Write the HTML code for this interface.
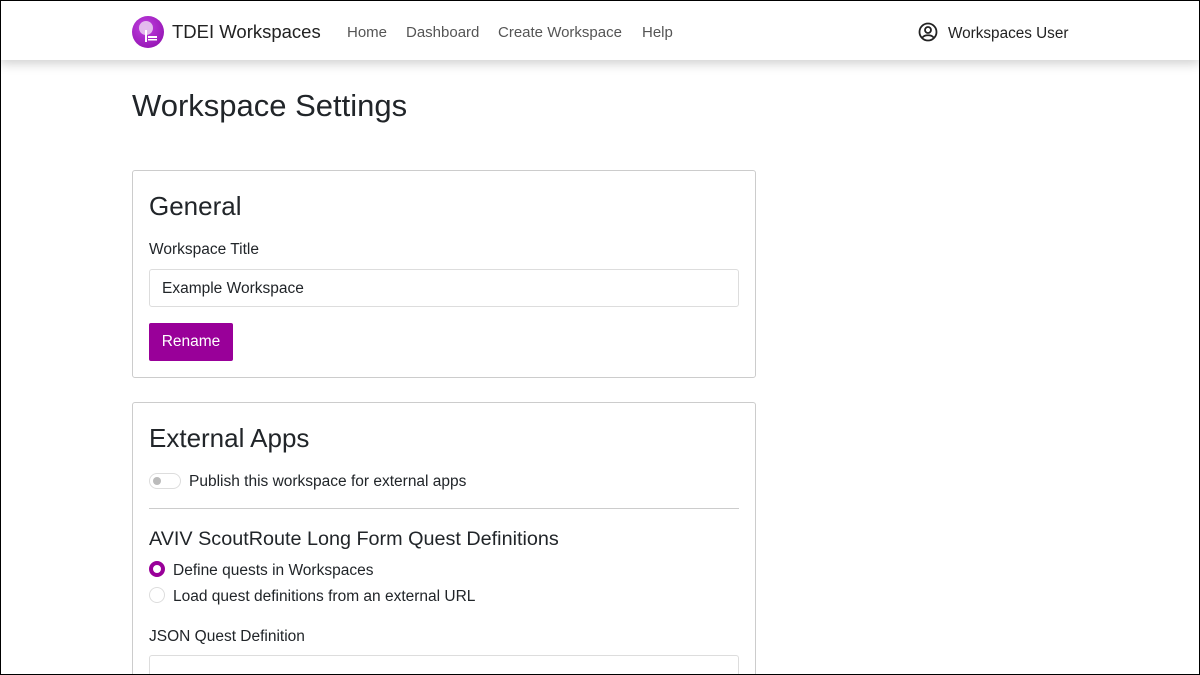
<!DOCTYPE html>
<html><head><meta charset="utf-8"><style>
*{box-sizing:border-box}
html,body{margin:0;width:1200px;height:675px;overflow:hidden;background:#fff;font-family:"Liberation Sans","DejaVu Sans",sans-serif;color:#212529}
#wrap{position:fixed;left:0;top:0;width:1200px;height:675px;overflow:hidden}
.frame{position:absolute;inset:0;border:1px solid #000;pointer-events:none;z-index:10}
nav{position:absolute;left:0;top:0;width:1200px;height:60px;background:#fff;box-shadow:0 4px 10px rgba(0,0,0,.18)}
.logo{position:absolute;left:132px;top:16px;width:32px;height:32px;border-radius:50%;background:radial-gradient(circle at 40% 35%,#c040e0,#8a0aa8)}
.brand{position:absolute;left:172px;top:21px;font-size:18.5px;color:#222}
.nl{position:absolute;top:24px;font-size:15px;color:#555}
.user{position:absolute;left:918px;top:22px;font-size:15.3px;color:#222}
h1{position:absolute;left:132px;top:88px;margin:0;font-weight:400;font-size:31px}
.card{position:absolute;left:132px;width:624px;border:1px solid #ccc;border-radius:3px}
.h2{position:absolute;left:16px;font-size:26px}
.lbl{position:absolute;left:16px;font-size:15.5px}
.inp{position:absolute;left:16px;width:590px;height:38px;border:1px solid #ddd;border-radius:3px;font-size:15.5px;padding:10px 12px}
.btn{position:absolute;left:16px;top:152px;width:84px;height:38px;background:#990099;color:#fff;font-size:15.5px;border-radius:2px;text-align:center;line-height:38px}
</style></head><body><div id="wrap">
<div class="frame"></div>
<nav>
<div class="logo"><svg width="32" height="32" viewBox="0 0 32 32"><circle cx="14" cy="12" r="7" fill="#e8c8f0" opacity=".9"/><rect x="13" y="14" width="2" height="12" fill="#fff"/><rect x="16" y="20" width="9" height="2" fill="#fff"/><rect x="16" y="23" width="9" height="1.5" fill="#fff"/></svg></div>
<div class="brand">TDEI Workspaces</div>
<div class="nl" style="left:347px">Home</div>
<div class="nl" style="left:406px">Dashboard</div>
<div class="nl" style="left:498px">Create Workspace</div>
<div class="nl" style="left:642px">Help</div>
<div class="user"><svg width="20" height="20" viewBox="0 0 20 20" style="vertical-align:-4px;margin-right:10px"><circle cx="10" cy="10" r="8.5" fill="none" stroke="#222" stroke-width="1.8"/><circle cx="10" cy="8" r="3" fill="none" stroke="#222" stroke-width="1.8"/><path d="M4.5 15.5c2-3 9-3 11 0" fill="none" stroke="#222" stroke-width="1.8"/></svg>Workspaces User</div>
</nav>
<h1>Workspace Settings</h1>
<div class="card" style="top:170px;height:208px">
<div class="h2" style="top:20px">General</div>
<div class="lbl" style="top:70px">Workspace Title</div>
<div class="inp" style="top:98px">Example Workspace</div>
<div class="btn">Rename</div>
</div>
<div class="card" style="top:402px;height:272px;border-bottom:none;border-radius:3px 3px 0 0">
<div class="h2" style="top:20px">External Apps</div>
<div style="position:absolute;left:16px;top:70px;width:32px;height:16px;border:1px solid #ddd;border-radius:8px"><div style="position:absolute;left:3px;top:3px;width:8px;height:8px;border-radius:50%;background:#bbb"></div></div>
<div class="lbl" style="top:70px;left:56px">Publish this workspace for external apps</div>
<div style="position:absolute;left:16px;top:105px;width:590px;border-top:1px solid #ccc"></div>
<div class="lbl" style="top:125px;font-size:19.8px">AVIV ScoutRoute Long Form Quest Definitions</div>
<div style="position:absolute;left:16px;top:158px;width:16px;height:16px;border-radius:50%;border:4.5px solid #990099;background:#fff"></div>
<div class="lbl" style="top:159px;left:40px">Define quests in Workspaces</div>
<div style="position:absolute;left:16px;top:184px;width:16px;height:16px;border-radius:50%;border:1px solid #ddd"></div>
<div class="lbl" style="top:185px;left:40px">Load quest definitions from an external URL</div>
<div class="lbl" style="top:225px">JSON Quest Definition</div>
<div class="inp" style="top:252px;height:20px;border-bottom:none;border-radius:3px 3px 0 0"></div>
</div>
</div></body></html>
